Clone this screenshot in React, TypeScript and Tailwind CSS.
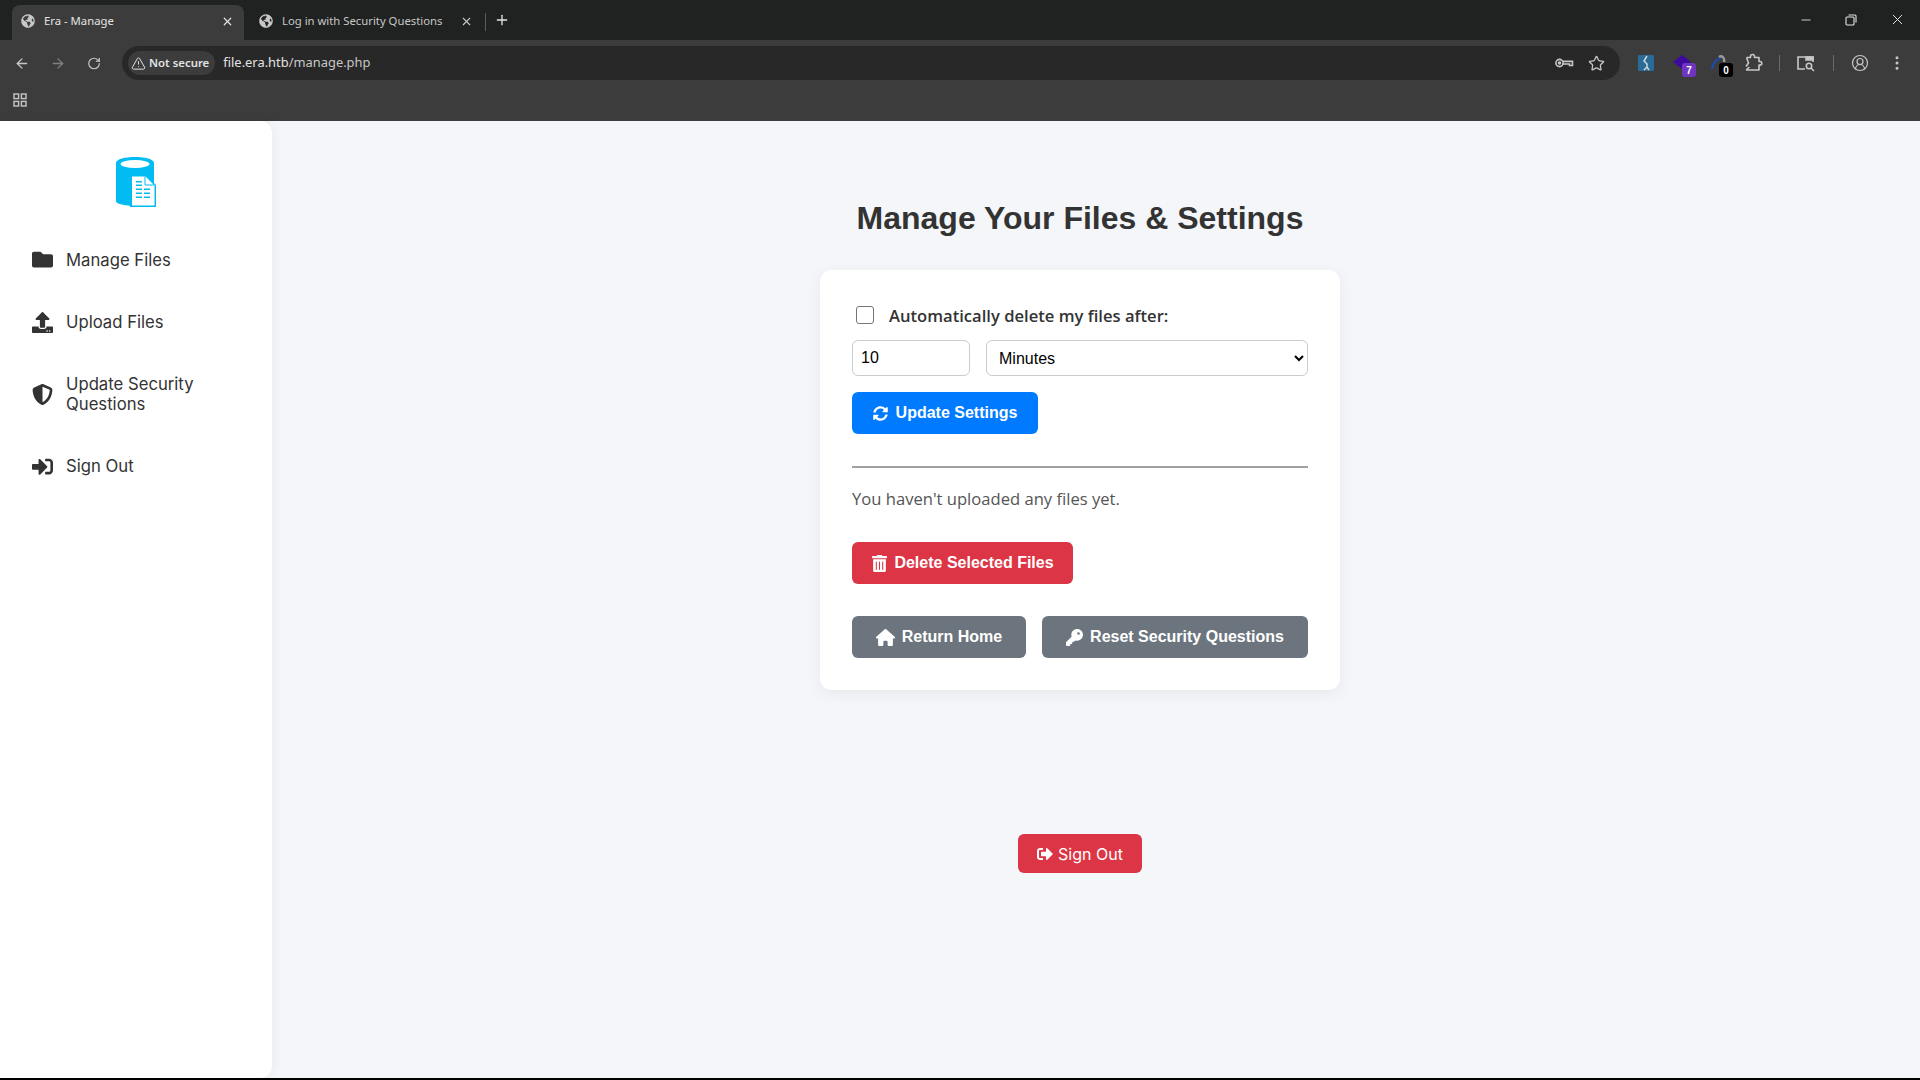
import { ArrowLeft, ArrowRight, RotateCw, TriangleAlert, Star, CircleUserRound, EllipsisVertical, X, Plus, Minus } from 'lucide-react';
import { FaGlobeAmericas, FaFolder, FaUpload, FaSignInAlt, FaSignOutAlt, FaSyncAlt, FaTrashAlt } from 'react-icons/fa';
import { FaShieldHalved, FaHouse, FaKey } from 'react-icons/fa6';

const Logo = () => (
  <svg width="40" height="50" viewBox="0 0 40 50">
    <path d="M0 6C0 -2 38 -2 38 6V44C38 50 22 50 15 49C8 48 0 47 0 44Z" fill="#00bcf2" />
    <ellipse cx="19" cy="7" rx="14.5" ry="4" fill="#fff" />
    <path d="M14 18H30L40 28V50H14Z" fill="#00bcf2" />
    <path d="M16 19.5H29.5L38.5 28.5V48.5H16Z" fill="#fff" />
    <path d="M29 19.5V28H38" fill="none" stroke="#00bcf2" strokeWidth="1" />
    <path d="M20 24h6v1.6h-6zM20 27.5h6v1.6h-6zM20 31.5h6v1.6h-6zM28 31.5h6v1.6h-6zM20 35.5h6v1.6h-6zM28 35.5h6v1.6h-6zM20 39.5h6v1.6h-6zM28 39.5h6v1.6h-6z" fill="#00bcf2" />
  </svg>
);

const AppsIcon = () => (
  <svg width="16" height="16" viewBox="0 0 16 16" fill="none" stroke="#c7c7c7" strokeWidth="1.4">
    <rect x="2" y="2" width="4.6" height="4.6" />
    <rect x="9.4" y="2" width="4.6" height="4.6" />
    <rect x="2" y="9.4" width="4.6" height="4.6" />
    <rect x="9.4" y="9.4" width="4.6" height="4.6" />
  </svg>
);

const KeyIcon = () => (
  <svg width="20" height="20" viewBox="0 0 20 20" fill="none" stroke="#c7c7c7" strokeWidth="1.6">
    <circle cx="5.5" cy="10" r="3.6" />
    <circle cx="5.5" cy="10" r="1" fill="#c7c7c7" />
    <path d="M9 8.4H18.5V12.5H15.5V11H9" />
  </svg>
);

const TabSearchIcon = () => (
  <svg width="20" height="20" viewBox="0 0 20 20" fill="none" stroke="#c7c7c7" strokeWidth="1.6">
    <path d="M9 16H2V4H17V9" />
    <path d="M10 4H17V7H10Z" fill="#c7c7c7" />
    <circle cx="13" cy="13" r="2.7" />
    <path d="M15 15L18 18" />
  </svg>
);

const PuzzleIcon = () => (
  <svg width="20" height="20" viewBox="0 0 20 20" fill="none" stroke="#c7c7c7" strokeWidth="1.6" className="ml-[17px]">
    <path d="M3.5 4.5H7.5V3.5a2 2 0 0 1 4 0v1H16V8.5h1a1.8 1.8 0 0 1 0 3.6h-1V17H3M3.5 4.5L5.5 10L3 13.5M3 17L6.5 14" strokeLinejoin="round" />
  </svg>
);

const RestoreIcon = () => (
  <svg width="12" height="12" viewBox="0 0 12 12" fill="none" stroke="#e3e3e3" strokeWidth="1.1">
    <rect x="1" y="3" width="8" height="8" rx="1" />
    <path d="M3.5 1H10a1 1 0 0 1 1 1V8.5" />
  </svg>
);

const ExtOne = () => (
  <svg width="16" height="16" viewBox="0 0 16 16">
    <rect width="16" height="16" rx="1" fill="#2a6a96" />
    <path d="M9 1L6 6L9 9V12M9 12L6 15M9 12L11 15" fill="none" stroke="#cfd8dc" strokeWidth="1.5" />
  </svg>
);

const ExtTwo = () => (
  <svg width="18" height="16" viewBox="0 0 18 16">
    <path d="M9 0L18 7L9 14L0 7Z" fill="#3d0a9e" />
  </svg>
);

const ExtThree = () => (
  <svg width="16" height="16" viewBox="0 0 16 16" fill="none" strokeWidth="2.4">
    <path d="M2 14C2 9 7 4 11 2" stroke="#1e4aa0" />
    <path d="M9 2C12 0 15 3 14 7" stroke="#9a9a9a" />
  </svg>
);

function NavItem({ icon, label }: { icon: React.ReactNode; label: React.ReactNode }) {
  return (
    <a className="flex items-center gap-[13px] pl-8 pr-5 text-[16.7px] leading-5 text-[#333]">
      <span className="flex w-[21px] shrink-0 justify-center text-[21px] text-[#333]">{icon}</span>
      <span>{label}</span>
    </a>
  );
}

function ActionButton({ icon, label, bg, className }: { icon: React.ReactNode; label: string; bg: string; className?: string }) {
  return (
    <button className={`flex h-[42px] items-center justify-center rounded-md text-[16px] font-bold text-white ${bg} ${className ?? ''}`}>
      {icon}
      {label}
    </button>
  );
}

export default function App() {
  return (
    <div className="flex h-screen flex-col overflow-hidden bg-black font-['Liberation_Sans',sans-serif]">
      {/* browser tabs */}
      <div className="flex h-10 shrink-0 items-end bg-[#202221] pl-3 font-['Noto_Sans',sans-serif] text-[11.3px] text-[#e3e3e3]">
        <div className="flex h-[35px] w-[232px] items-center rounded-t-lg bg-[#3c3c3c] pb-[3px] pl-[9px] pr-[10px]">
          <FaGlobeAmericas className="text-[14px] text-[#c7c7c7]" />
          <span className="ml-[9px] flex-1">Era - Manage</span>
          <X size={13} strokeWidth={2.2} />
        </div>
        <div className="flex h-[35px] w-[241px] items-center pb-[3px] pl-[15px] pr-[12px] text-[#c7c7c7]">
          <FaGlobeAmericas className="text-[14px]" />
          <span className="ml-[9px] flex-1">Log in with Security Questions</span>
          <X size={13} strokeWidth={2} />
        </div>
        <div className="mb-[9px] h-[18px] w-px bg-[#5c5c5c]" />
        <Plus size={16} strokeWidth={2} className="mb-[12px] ml-[8px] text-[#e3e3e3]" />
        <div className="mb-[12px] ml-auto flex items-center gap-[32px] pr-[14px]">
          <Minus size={14} className="text-[#c7c7c7]" />
          <RestoreIcon />
          <X size={17} strokeWidth={1.4} className="text-[#e3e3e3]" />
        </div>
      </div>

      {/* toolbar */}
      <div className="flex h-10 shrink-0 items-center bg-[#3c3c3c] pl-[14px] pr-[14px] pt-[6px] text-[#c7c7c7]">
        <ArrowLeft size={17} />
        <ArrowRight size={17} className="ml-[20px] text-[#808080]" />
        <RotateCw size={15} className="ml-[21px]" />
        <div className="ml-[21px] flex h-[34px] w-[1498px] shrink-0 items-center rounded-full bg-[#282828] pl-[6px] pr-[5px]">
          <div className="flex h-6 items-center gap-[3px] rounded-full bg-[#3c3c3c] pl-[3px] pr-[6px] font-['Noto_Sans',sans-serif] text-[11.4px] font-semibold text-[#e3e3e3]">
            <TriangleAlert size={15} strokeWidth={1.6} />
            Not secure
          </div>
          <span className="ml-[8px] font-['Noto_Sans',sans-serif] text-[12.9px] text-[#e3e3e3]">
            file.era.htb<span className="text-[#c7c7c7]">/manage.php</span>
          </span>
          <div className="ml-auto flex items-center gap-[14px] pr-[10px]">
            <KeyIcon />
            <Star size={17} strokeWidth={1.8} />
          </div>
        </div>
        <div className="ml-[18px] flex items-center">
          <ExtOne />
          <div className="relative ml-[19px]">
            <ExtTwo />
            <span className="absolute -right-[5px] top-[8px] flex h-[14px] w-[14px] items-center justify-center rounded-[3px] bg-[#6f35c0] text-[10px] font-bold text-white">7</span>
          </div>
          <div className="relative ml-[19px]">
            <ExtThree />
            <span className="absolute -right-[7px] top-[8px] flex h-[14px] w-[14px] items-center justify-center rounded-[3px] bg-black text-[10px] font-bold text-white">0</span>
          </div>
          <PuzzleIcon />
          <div className="ml-[16px] h-4 w-px bg-[#6a6a6a]" />
          <div className="ml-[16px]"><TabSearchIcon /></div>
          <div className="ml-[17px] h-4 w-px bg-[#6a6a6a]" />
          <CircleUserRound size={18} strokeWidth={1.6} className="ml-[17px]" />
          <EllipsisVertical size={18} className="ml-[19px]" />
        </div>
      </div>

      {/* bookmarks bar */}
      <div className="flex h-[41px] shrink-0 items-center bg-[#3c3c3c] pb-[2px] pl-[12px]">
        <AppsIcon />
      </div>

      {/* page */}
      <div className="mb-[2px] flex min-h-0 flex-1 bg-[#f4f6f9]">
        <aside className="flex w-[272px] shrink-0 flex-col rounded-r-xl bg-white pt-[36px] shadow-[2px_0_12px_rgba(0,0,0,0.05)] font-['Inter',sans-serif]">
          <div className="flex justify-center">
            <Logo />
          </div>
          <nav className="mt-[42px] flex flex-col gap-[41.5px]">
            <NavItem icon={<FaFolder />} label="Manage Files" />
            <NavItem icon={<FaUpload />} label="Upload Files" />
            <NavItem icon={<FaShieldHalved />} label={<>Update Security<br />Questions</>} />
            <NavItem icon={<FaSignInAlt />} label="Sign Out" />
          </nav>
        </aside>

        <main className="flex flex-1 flex-col items-center pr-8">
          <h1 className="mt-[79px] text-[32px] font-bold leading-[37px] text-[#333]">Manage Your Files &amp; Settings</h1>
          <div className="mt-[33px] flex w-[520px] flex-col rounded-xl bg-white p-8 shadow-[0_4px_16px_rgba(0,0,0,0.06)]">
            <label className="mt-[1px] flex items-center pl-[4px] font-['Open_Sans',sans-serif] text-[16.6px] font-semibold leading-6 text-[#333]">
              <input type="checkbox" className="h-[18px] w-[18px] appearance-none rounded-[3px] border border-[#767676] bg-white" />
              <span className="ml-[15px] translate-y-px">Automatically delete my files after:</span>
            </label>
            <div className="mt-[13px] flex gap-4">
              <input
                type="number"
                defaultValue={10}
                className="h-9 w-[118px] rounded-md border border-[#ccc] pl-2 text-[16px] text-black [appearance:textfield] outline-none"
              />
              <select className="h-9 flex-1 rounded-md border border-[#ccc] bg-white pl-2 text-[16px] text-black outline-none">
                <option>Minutes</option>
              </select>
            </div>
            <ActionButton icon={<FaSyncAlt className="mr-2 text-[15px]" />} label="Update Settings" bg="bg-[#007bff]" className="mt-4 w-[186px]" />
            <hr className="mt-8 border-t-[2px] border-[#a0a0a0]" />
            <p className="mt-[19px] font-['Open_Sans',sans-serif] text-[16.6px] leading-6 text-[#555]">You haven't uploaded any files yet.</p>
            <ActionButton icon={<FaTrashAlt className="mr-[6px] text-[17px]" />} label="Delete Selected Files" bg="bg-[#dc3545]" className="mt-[31px] w-[221px]" />
            <div className="mt-8 flex gap-4">
              <ActionButton icon={<FaHouse className="mr-[7px] text-[19px]" />} label="Return Home" bg="bg-[#6c757d]" className="w-[174px]" />
              <ActionButton icon={<FaKey className="mr-[7px] text-[17px]" />} label="Reset Security Questions" bg="bg-[#6c757d]" className="flex-1" />
            </div>
          </div>
          <button className="mt-[144px] flex h-[39px] w-[124px] items-center justify-center gap-[5px] rounded-md bg-[#dc3545] font-['Inter',sans-serif] text-[16px] text-white">
            <FaSignOutAlt className="text-[16px]" />
            Sign Out
          </button>
        </main>
      </div>
    </div>
  );
}
